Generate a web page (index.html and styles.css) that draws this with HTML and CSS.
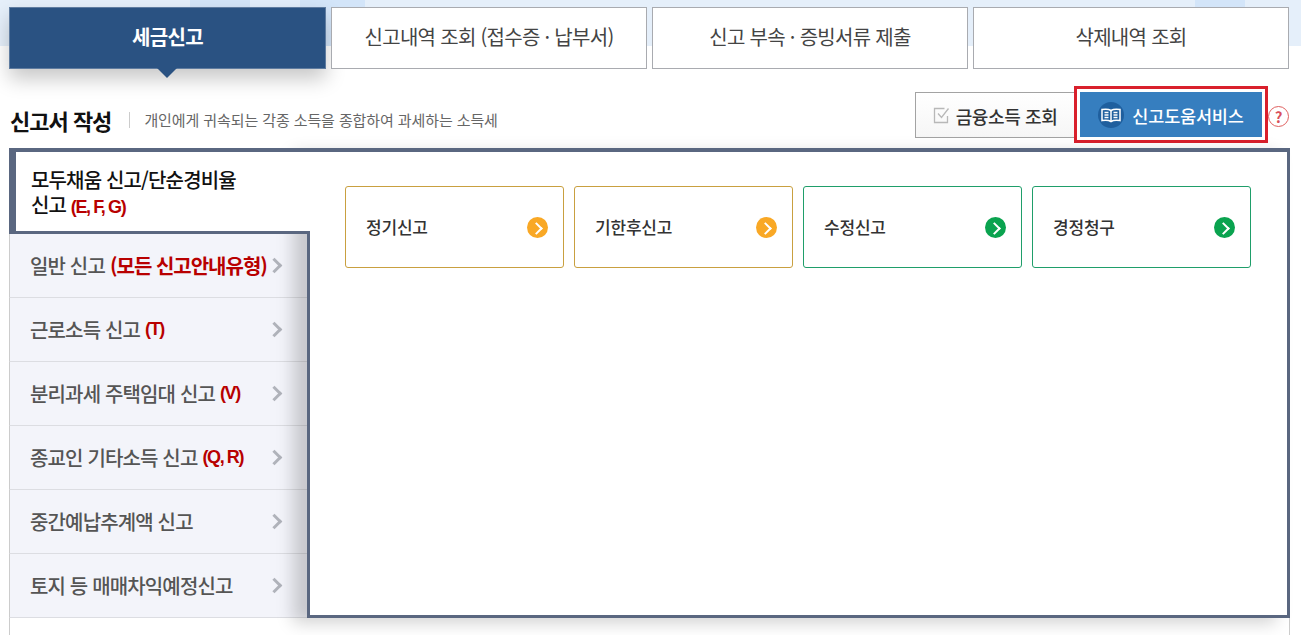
FILE: index.html
```html
<!DOCTYPE html>
<html lang="ko">

<head>
    <meta charset="UTF-8" />
    <title>세금신고</title>
    <link rel="stylesheet" href="styles.css">
</head>

<body>
    <div class="top-band"></div>

    <div class="wrap">
        <ul class="tabs">
            <li class="tab active">세금신고</li>
            <li class="tab">신고내역 조회 (접수증 · 납부서)</li>
            <li class="tab">신고 부속 · 증빙서류 제출</li>
            <li class="tab">삭제내역 조회</li>
        </ul>

        <div class="head-row">
            <h2>신고서 작성</h2>
            <p class="desc">개인에게 귀속되는 각종 소득을 종합하여 과세하는 소득세</p>
            <div class="head-btns">
                <button class="btn-plain">
                    <svg width="17" height="17" viewBox="0 0 17 17" fill="none" stroke="#b8b8b8" stroke-width="1.3">
                        <path d="M14.500 9v6.500H1.500V1.500h10" />
                        <path d="M5 6.500l3.500 4 7-9" />
                    </svg>
                    금융소득 조회
                </button>
                <div class="help-box">
                    <button class="btn-help">
                        <span class="book">
                            <svg width="20" height="15" viewBox="0 0 20 15" fill="none" stroke="#fff" stroke-width="1.5">
                                <path d="M10 2.500C8 1.200 4.500 .9 1 1.500v11c3.500-.6 7-.3 9 1 2-1.300 5.500-1.600 9-1v-11C15.500 .9 12 1.200 10 2.500z" />
                                <path d="M10 2.500v11M3.500 4.500h4M3.500 7h4M3.500 9.500h4M12.500 4.500h4M12.500 7h4M12.500 9.500h4" />
                            </svg>
                        </span>
                        신고도움서비스
                    </button>
                </div>
                <span class="question">?</span>
            </div>
        </div>

        <div class="outer">
            <div class="panel">
                <ul class="side">
                    <li class="side-item active">모두채움 신고/단순경비율<br>신고 <em class="latin">(E, F, G)</em></li>
                    <li class="side-item">일반 신고 <em>(모든 신고안내유형)</em></li>
                    <li class="side-item">근로소득 신고 <em class="latin">(T)</em></li>
                    <li class="side-item">분리과세 주택임대 신고 <em class="latin">(V)</em></li>
                    <li class="side-item">종교인 기타소득 신고 <em class="latin">(Q, R)</em></li>
                    <li class="side-item">중간예납추계액 신고</li>
                    <li class="side-item">토지 등 매매차익예정신고</li>
                </ul>
                <div class="content">
                    <a class="card orange">정기신고<span class="dot"></span></a>
                    <a class="card orange">기한후신고<span class="dot"></span></a>
                    <a class="card green">수정신고<span class="dot"></span></a>
                    <a class="card green">경정청구<span class="dot"></span></a>
                </div>
            </div>
        </div>
    </div>
</body>

</html>
```

FILE: styles.css
```css
* {
    box-sizing: border-box;
}

html,
body {
    height: 100%;
}

body {
    margin: 0;
    overflow: hidden;
    position: relative;
    background: #fff;
    color: #333;
    font-family: "Noto Sans CJK KR", "Noto Sans", sans-serif;
}

ul {
    list-style: none;
    margin: 0;
    padding: 0;
}

/* light blue band behind the tabs */
.top-band {
    position: absolute;
    top: 0;
    left: 0;
    right: 0;
    height: 46px;
    background: linear-gradient(90deg,
            #e5effa 0, #e5effa 190px,
            #d3e5f9 190px, #d3e5f9 250px,
            #e3eefb 250px, #e3eefb 300px,
            #d3e5f9 300px, #d3e5f9 365px,
            #e5effa 365px, #e5effa 1195px,
            #d3e5f9 1195px, #d3e5f9 1245px,
            #e5effa 1245px);
}

.wrap {
    position: relative;
    display: flex;
    flex-direction: column;
    width: 1281px;
    height: 100%;
    margin-left: 9px;
    padding-top: 7px;
}

.tabs {
    display: grid;
    grid-template-columns: 317px repeat(3, 316px);
    column-gap: 5px;
    width: 1280px;
}

.tab {
    position: relative;
    height: 62px;
    display: flex;
    align-items: center;
    justify-content: center;
    padding-bottom: 3px;
    background: #fff;
    border: 1px solid #a9abb0;
    font-size: 20px;
    letter-spacing: -0.7px;
    color: #444;
}

.tab.active {
    background: #2a5282;
    border-color: #5f7ca0;
    color: #fff;
    font-weight: 700;
    letter-spacing: -0.6px;
    box-shadow: 0 10px 20px rgba(0, 0, 0, 0.22);
}

.tab.active::after {
    content: "";
    position: absolute;
    left: 147px;
    top: 60px;
    border: 10px solid transparent;
    border-top-color: #2a5282;
}

.head-row {
    display: flex;
    align-items: center;
    height: 79px;
    padding-top: 12px;
}

h2 {
    position: relative;
    margin: 11px 0 0 1px;
    padding-right: 19px;
    font-size: 22px;
    font-weight: 700;
    letter-spacing: -1px;
    color: #111;
    line-height: 26px;
}

h2::after {
    content: "";
    position: absolute;
    right: 0;
    top: 5px;
    height: 16px;
    width: 1px;
    background: #ccc;
}

.desc {
    margin: 9px 0 0 14px;
    font-size: 15px;
    color: #666;
    letter-spacing: -0.1px;
}

.head-btns {
    display: flex;
    align-items: center;
    margin-left: auto;
    margin-right: 1px;
}

button {
    font-family: inherit;
    cursor: pointer;
}

.btn-plain {
    display: flex;
    align-items: center;
    justify-content: center;
    gap: 6px;
    width: 160px;
    height: 46px;
    padding: 2px 0 0;
    background: linear-gradient(#fff, #f6f6f6);
    border: 1px solid #a3a3a3;
    font-size: 18px;
    font-weight: 500;
    color: #333;
    letter-spacing: -0.4px;
}

.help-box {
    margin-left: -1px;
    border: 3px solid #d9202c;
    padding: 3px;
    background: #fff;
}

.btn-help {
    display: flex;
    align-items: center;
    justify-content: center;
    gap: 8px;
    width: 182px;
    height: 45px;
    padding: 1px 0 0;
    background: #367ebf;
    border: 0;
    font-size: 17.500px;
    font-weight: 500;
    color: #fff;
    letter-spacing: -0.2px;
}

.book {
    width: 26px;
    height: 26px;
    display: flex;
    align-items: center;
    justify-content: center;
    border-radius: 50%;
    background: #1f5f9e;
}

.question {
    width: 21px;
    height: 21px;
    margin-top: 3px;
    display: flex;
    align-items: center;
    justify-content: center;
    border: 1.5px solid #e0605f;
    border-radius: 50%;
    color: #d9505a;
    font-size: 15px;
    font-weight: 700;
}

.outer {
    flex: 1;
    border-left: 1px solid #ccc;
    border-right: 1px solid #ccc;
}

.panel {
    display: flex;
    height: 470px;
    margin-left: -1px;
    margin-right: -1px;
}

.side {
    width: 298px;
    flex: none;
}

.side-item {
    position: relative;
    height: 64px;
    display: flex;
    align-items: center;
    padding-left: 20px;
    padding-bottom: 1px;
    background: #f3f4fa;
    border-bottom: 1px solid #dcdde2;
    border-left: 1px solid #ccc;
    font-size: 20px;
    font-weight: 500;
    color: #555;
    letter-spacing: -0.85px;
    white-space: nowrap;
}

.side-item::after {
    content: "";
    position: absolute;
    right: 27px;
    top: 26px;
    width: 8px;
    height: 8px;
    border-top: 3px solid #b0b3bb;
    border-right: 3px solid #b0b3bb;
    transform: rotate(45deg);
}

.side-item em {
    font-style: normal;
    font-weight: 700;
    color: #b80000;
    margin-left: 5px;
    letter-spacing: -1px;
}

.side-item em.latin {
    font-family: "Liberation Sans", sans-serif;
    font-size: 18px;
    letter-spacing: -1.4px;
}

.side-item.active {
    z-index: 2;
    display: block;
    width: 301px;
    height: 86px;
    padding: 15px 0 0 15px;
    background: #fff;
    border-top: 4px solid #5a6780;
    border-left: 7px solid #5a6780;
    border-bottom: 3px solid #5a6780;
    color: #111;
    line-height: 25px;
}

.side-item.active em {
    margin-left: 0;
}

.side-item.active::after {
    display: none;
}

.content {
    position: relative;
    z-index: 1;
    flex: 1;
    display: flex;
    align-items: flex-start;
    gap: 10px;
    padding: 34px 35px 0;
    background: #fff;
    border: 3px solid #5a6780;
    border-top-width: 4px;
    box-shadow: -14px 5px 16px rgba(0, 0, 0, 0.18);
}

.card {
    width: 219px;
    height: 82px;
    display: flex;
    align-items: center;
    justify-content: space-between;
    padding: 0 15px 2px 20px;
    border: 1px solid;
    border-radius: 3px;
    font-size: 17px;
    font-weight: 500;
    color: #333;
    letter-spacing: -0.2px;
}

.card.orange {
    border-color: #c9a040;
}

.card.green {
    border-color: #1f9e6a;
}

.dot {
    position: relative;
    width: 21px;
    height: 21px;
    margin-top: 2px;
    border-radius: 50%;
}

.orange .dot {
    background: #f9a825;
}

.green .dot {
    background: #0aa34f;
}

.dot::after {
    content: "";
    position: absolute;
    left: 5px;
    top: 7px;
    width: 7px;
    height: 7px;
    border-top: 2px solid #fff;
    border-right: 2px solid #fff;
    transform: rotate(45deg);
}
```
